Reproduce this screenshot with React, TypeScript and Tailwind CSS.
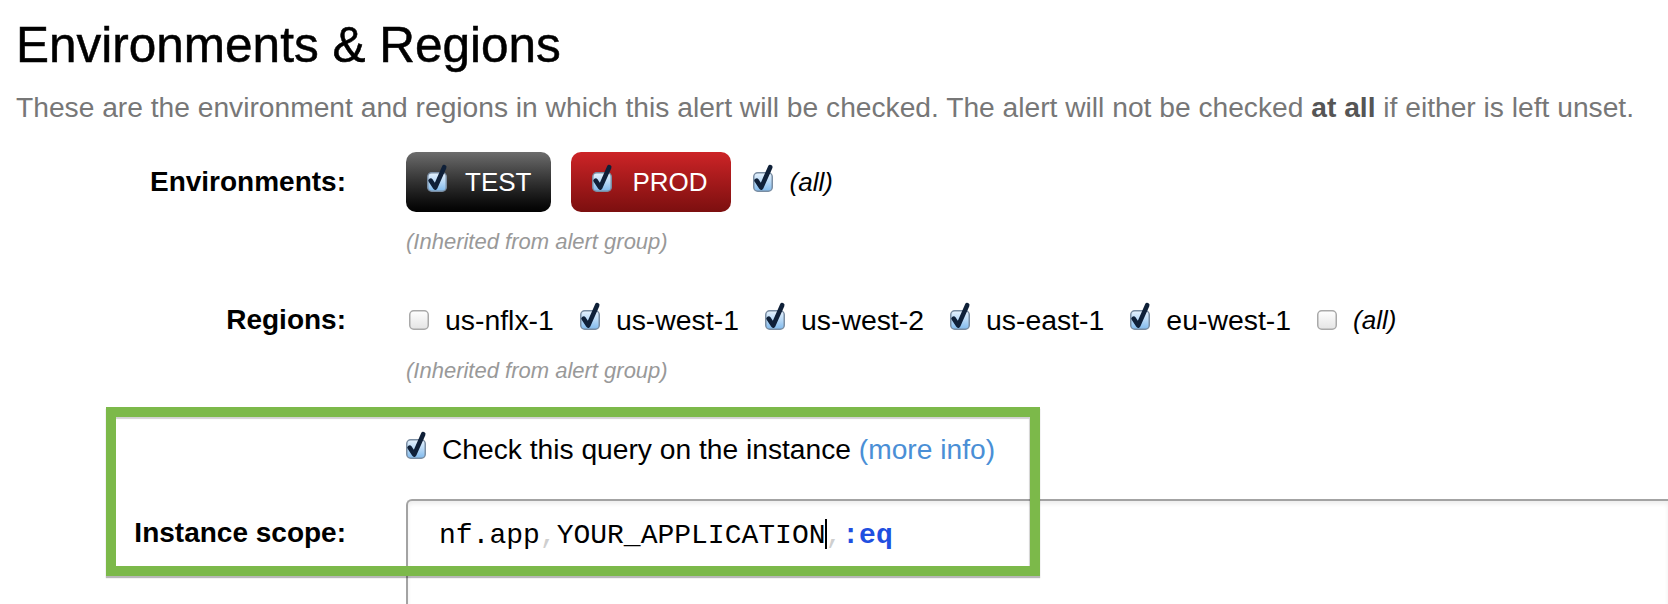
import React from "react";

function Box({ checked }: { checked: boolean }) {
  return (
    <svg
      width="20"
      height="20"
      viewBox="0 0 20 20"
      overflow="visible"
      className="shrink-0 overflow-visible"
    >
      <defs>
        <linearGradient id="cbOn" x1="0" y1="0" x2="0" y2="1">
          <stop offset="0" stopColor="#e6f2fd" />
          <stop offset="0.45" stopColor="#bcdbf7" />
          <stop offset="1" stopColor="#7fb9ec" />
        </linearGradient>
        <linearGradient id="cbOff" x1="0" y1="0" x2="0" y2="1">
          <stop offset="0" stopColor="#ffffff" />
          <stop offset="1" stopColor="#e4e4e4" />
        </linearGradient>
      </defs>
      <rect
        x="0.75"
        y="0.75"
        width="18.5"
        height="18.5"
        rx="4"
        fill={checked ? "url(#cbOn)" : "url(#cbOff)"}
        stroke={checked ? "#7a8da2" : "#a9a9a9"}
        strokeWidth="1.5"
      />
      {checked && (
        <path
          d="M3.6 8.6 L8.2 15.6 L17.2 -4.8"
          stroke="#0f2038"
          strokeWidth="4.6"
          fill="none"
          strokeLinecap="round"
          strokeLinejoin="round"
        />
      )}
    </svg>
  );
}

function Item({ checked, label, italic }: { checked: boolean; label: string; italic?: boolean }) {
  return (
    <div className="mr-[26px] flex items-center">
      <Box checked={checked} />
      <span className={"ml-4 leading-none " + (italic ? "text-[26px] italic" : "text-[28.4px]")}>{label}</span>
    </div>
  );
}

function Row({ label, children, className }: { label?: string; children: React.ReactNode; className?: string }) {
  return (
    <div className={"flex items-center " + (className ?? "")}>
      <div className="w-[346px] shrink-0 text-right text-[28px] font-bold leading-none">{label}</div>
      <div className="ml-[60px] flex items-center">{children}</div>
    </div>
  );
}

export default function App() {
  return (
    <div className="relative h-[604px] w-[1668px] overflow-hidden bg-white font-['Liberation_Sans',Arial,sans-serif] text-black">
      <div className="pl-4 pt-5">
        <h1 className="text-[49.5px] font-normal leading-none [-webkit-text-stroke:0.5px_black]">Environments &amp; Regions</h1>
        <p className="mt-[23px] whitespace-nowrap text-[28.2px] leading-none text-[#777]">
          These are the environment and regions in which this alert will be checked. The alert will not be checked{" "}
          <b className="text-[#555]">at all</b> if either is left unset.
        </p>
      </div>

      <Row label="Environments:" className="mt-[31px] h-[60px]">
        <div className="flex h-[60px] items-center gap-[18px] rounded-[10px] bg-gradient-to-b from-[#6d6d6d] to-[#030303] pl-[21px] pr-5">
          <Box checked />
          <span className="text-[26px] leading-none text-white">TEST</span>
        </div>
        <div className="ml-5 flex h-[60px] items-center gap-[20px] rounded-[10px] bg-gradient-to-b from-[#cd2427] to-[#7c0f0f] pl-[21px] pr-[23px]">
          <Box checked />
          <span className="text-[26px] leading-none text-white">PROD</span>
        </div>
        <div className="ml-[22px] flex items-center">
          <Box checked />
          <span className="ml-[17px] text-[26px] italic leading-none">(all)</span>
        </div>
      </Row>
      <Row className="mt-[19px]">
        <span className="text-[22px] italic leading-none text-[#999]">(Inherited from alert group)</span>
      </Row>

      <Row label="Regions:" className="mt-[53px] h-[28px]">
        <div className="ml-[3px] flex items-center">
          <Item checked={false} label="us-nflx-1" />
          <Item checked label="us-west-1" />
          <Item checked label="us-west-2" />
          <Item checked label="us-east-1" />
          <Item checked label="eu-west-1" />
          <Item checked={false} label="(all)" italic />
        </div>
      </Row>
      <Row className="mt-[26px]">
        <span className="text-[22px] italic leading-none text-[#999]">(Inherited from alert group)</span>
      </Row>

      <Row className="mt-[53px] h-[28px]">
        <Box checked />
        <span className="ml-4 whitespace-nowrap text-[28.2px] leading-none">
          Check this query on the instance <span className="text-[#4a8fd6]">(more info)</span>
        </span>
      </Row>

      <div className="mt-9 flex items-start">
        <div className="w-[346px] shrink-0 pt-5 text-right text-[28px] font-bold leading-none">Instance scope:</div>
        <div className="ml-[60px] h-[140px] flex-1 rounded-tl-[6px] border-l-2 border-t-2 border-[#a3a3a3] pl-[31px] pt-[18px] shadow-[inset_0_3px_4px_rgba(0,0,0,0.07)]">
          <div className="whitespace-nowrap font-['Liberation_Mono','Courier_New',monospace] text-[28px] leading-none">
            <span>nf.app</span>
            <span className="text-[#cfcfcf]">,</span>
            <span>YOUR_APPLICATION</span>
            <span className="-mr-[2px] inline-block h-[30px] w-[2px] bg-black align-[-6px]" />
            <span className="text-[#cfcfcf]">,</span>
            <span className="font-bold text-[#1f4fe0]">:eq</span>
          </div>
        </div>
      </div>

      <div className="pointer-events-none absolute left-[106px] top-[407px] h-[169px] w-[934px] border-[10px] border-[#7cb94a] shadow-[0_2px_1px_rgba(0,0,0,0.28),inset_-1px_2px_1px_rgba(0,0,0,0.18)]" />
    </div>
  );
}
